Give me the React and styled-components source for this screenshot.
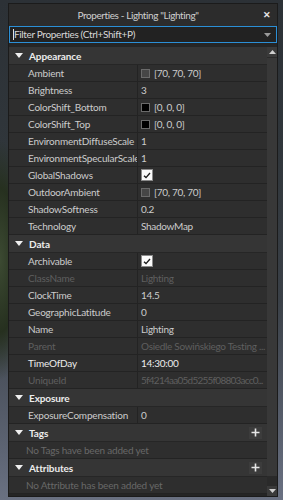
import React from "react";
import styled, { createGlobalStyle } from "styled-components";

const GlobalStyle = createGlobalStyle`
  html, body {
    margin: 0;
    padding: 0;
  }
  body {
    font-family: Lato, "Noto Sans", sans-serif;
    background: #2a2f33;
  }
`;

const sections = [
  {
    title: "Appearance",
    rows: [
      { name: "Ambient", value: "[70, 70, 70]", swatch: "#464646" },
      { name: "Brightness", value: "3" },
      { name: "ColorShift_Bottom", value: "[0, 0, 0]", swatch: "#000" },
      { name: "ColorShift_Top", value: "[0, 0, 0]", swatch: "#000" },
      { name: "EnvironmentDiffuseScale", value: "1" },
      { name: "EnvironmentSpecularScale", value: "1" },
      { name: "GlobalShadows", check: true },
      { name: "OutdoorAmbient", value: "[70, 70, 70]", swatch: "#464646" },
      { name: "ShadowSoftness", value: "0.2" },
      { name: "Technology", value: "ShadowMap" },
    ],
  },
  {
    title: "Data",
    rows: [
      { name: "Archivable", check: true },
      { name: "ClassName", value: "Lighting", disabled: true },
      { name: "ClockTime", value: "14.5" },
      { name: "GeographicLatitude", value: "0" },
      { name: "Name", value: "Lighting" },
      { name: "Parent", value: "Osiedle Sowińskiego Testing ...", disabled: true },
      { name: "TimeOfDay", value: "14:30:00", bright: true },
      { name: "UniqueId", value: "5f4214aa05d5255f08803acc0...", disabled: true, tight: true },
    ],
  },
  {
    title: "Exposure",
    rows: [{ name: "ExposureCompensation", value: "0" }],
  },
];

const Caret = () => (
  <svg width="8" height="5" viewBox="0 0 8 5">
    <path d="M0 0 H8 L4 5 Z" fill="#f0f0f0" />
  </svg>
);

const Plus = () => (
  <svg width="9" height="9" viewBox="0 0 9 9">
    <path d="M4.5 0.5 V8.5 M0.5 4.5 H8.5" stroke="#e6e6e6" strokeWidth="1.6" />
  </svg>
);

const Check = () => (
  <svg width="8" height="7" viewBox="0 0 8 7">
    <path d="M1 3.8 L3 5.6 L7 1" stroke="#1a1a1a" strokeWidth="1.4" fill="none" />
  </svg>
);

const App = () => {
  return (
    <>
      <GlobalStyle />
      <Scene>
        <Window>
          <TitleBar>
            <Title>Properties - Lighting "Lighting"</Title>
            <Close>✕</Close>
          </TitleBar>
          <Filter>
            <FilterText>Filter Properties (Ctrl+Shift+P)</FilterText>
            <DropArrow>
              <svg width="7" height="4" viewBox="0 0 7 4">
                <path d="M0 0 H7 L3.5 4 Z" fill="#9a9a9a" />
              </svg>
            </DropArrow>
          </Filter>
          <Body>
            <List>
              {sections.map((s) => (
                <React.Fragment key={s.title}>
                  <Header>
                    <Caret />
                    <HeaderText>{s.title}</HeaderText>
                  </Header>
                  {s.rows.map((r) => (
                    <Row key={r.name}>
                      <NameCell $disabled={r.disabled} $bright={r.bright}>
                        {r.name}
                      </NameCell>
                      <ValueCell $disabled={r.disabled} $bright={r.bright}>
                        {r.swatch && <Swatch $color={r.swatch} />}
                        {r.check ? (
                          <CheckBox>
                            <Check />
                          </CheckBox>
                        ) : (
                          <ValueText $tight={r.tight}>{r.value}</ValueText>
                        )}
                      </ValueCell>
                    </Row>
                  ))}
                </React.Fragment>
              ))}
              <Header>
                <Caret />
                <HeaderText>Tags</HeaderText>
                <AddButton>
                  <Plus />
                </AddButton>
              </Header>
              <EmptyRow>No Tags have been added yet</EmptyRow>
              <Header>
                <Caret />
                <HeaderText>Attributes</HeaderText>
                <AddButton>
                  <Plus />
                </AddButton>
              </Header>
              <EmptyRow>No Attribute has been added yet</EmptyRow>
            </List>
            <ScrollBar>
              <ScrollArrow>
                <svg width="7" height="4" viewBox="0 0 7 4">
                  <path d="M0 4 H7 L3.5 0 Z" fill="#cfcfcf" />
                </svg>
              </ScrollArrow>
              <Thumb />
              <ScrollArrow>
                <svg width="7" height="4" viewBox="0 0 7 4">
                  <path d="M0 0 H7 L3.5 4 Z" fill="#cfcfcf" />
                </svg>
              </ScrollArrow>
            </ScrollBar>
          </Body>
        </Window>
      </Scene>
    </>
  );
};

export default App;

const Scene = styled.div`
  width: 283px;
  height: 500px;
  box-sizing: border-box;
  padding: 3px 5px 3px 8px;
  background:
    radial-gradient(ellipse 30px 120px at 0 260px, #3c4a32 0%, #26301f 60%, transparent 100%),
    linear-gradient(180deg, #2c3136 0%, #30363b 30%, #3a4047 60%, #5d6473 90%, #6a7182 100%);
`;

const Window = styled.div`
  width: 270px;
  height: 494px;
  background: #252525;
  border: 1px solid #1b1b1b;
  box-sizing: border-box;
  display: flex;
  flex-direction: column;
  overflow: hidden;
`;

const TitleBar = styled.div`
  height: 22px;
  flex-shrink: 0;
  background: #2c2c2c;
  display: flex;
  align-items: center;
  justify-content: center;
  position: relative;
`;

const Title = styled.div`
  color: #cfcfcf;
  font-size: 10px;
  letter-spacing: -0.4px;
  margin-left: -10px;
`;

const Close = styled.div`
  position: absolute;
  right: 6px;
  top: 5px;
  color: #e6e6e6;
  font-size: 9px;
  font-weight: bold;
`;

const Filter = styled.div`
  height: 17px;
  flex-shrink: 0;
  border: 1px solid #2b8fd6;
  background: #222;
  box-sizing: border-box;
  display: flex;
  align-items: center;
  padding: 0 4px 0 3px;
`;

const FilterText = styled.div`
  flex: 1;
  color: #d8d8d8;
  font-size: 10px;
  letter-spacing: -0.35px;
  border-left: 1px solid #e0e0e0;
  line-height: 11px;
`;

const DropArrow = styled.div`
  display: flex;
  align-items: center;
  padding-right: 1px;
`;

const Body = styled.div`
  flex: 1;
  display: flex;
  margin-top: 4px;
  overflow: hidden;
`;

const List = styled.div`
  flex: 1;
  overflow: hidden;
  display: flex;
  flex-direction: column;
`;

const Header = styled.div`
  height: 18px;
  flex-shrink: 0;
  box-sizing: border-box;
  background: #353535;
  border-bottom: 1px solid #262626;
  display: flex;
  align-items: center;
  padding-left: 6px;
  gap: 6px;
`;

const HeaderText = styled.div`
  flex: 1;
  color: #ececec;
  font-size: 10px;
  letter-spacing: -0.1px;
  font-weight: bold;
`;

const AddButton = styled.div`
  width: 13px;
  height: 12px;
  margin-right: 5px;
  background: #3c3c3c;
  display: flex;
  align-items: center;
  justify-content: center;
`;

const Row = styled.div`
  height: 17px;
  flex-shrink: 0;
  box-sizing: border-box;
  background: #2e2e2e;
  border-bottom: 1px solid #232323;
  display: flex;
  font-size: 10px;
  letter-spacing: -0.2px;
`;

const NameCell = styled.div`
  width: 129px;
  box-sizing: border-box;
  padding-left: 19px;
  border-right: 1px solid #232323;
  display: flex;
  align-items: center;
  white-space: nowrap;
  overflow: hidden;
  color: ${(p) => (p.$disabled ? "#5f5f5f" : p.$bright ? "#ececec" : "#cccccc")};
`;

const ValueCell = styled.div`
  flex: 1;
  min-width: 0;
  padding-left: 3px;
  display: flex;
  align-items: center;
  gap: 4px;
  white-space: nowrap;
  overflow: hidden;
  color: ${(p) => (p.$disabled ? "#5f5f5f" : p.$bright ? "#ececec" : "#cccccc")};
`;

const ValueText = styled.span`
  letter-spacing: ${(p) => (p.$tight ? "-0.75px" : "-0.3px")};
`;

const Swatch = styled.div`
  width: 9px;
  height: 9px;
  box-sizing: border-box;
  border: 1px solid #6a6a6a;
  background: ${(p) => p.$color};
  flex-shrink: 0;
`;

const CheckBox = styled.div`
  width: 12px;
  height: 12px;
  box-sizing: border-box;
  border: 1px solid #8a8a8a;
  background: #fafafa;
  display: flex;
  align-items: center;
  justify-content: center;
`;

const EmptyRow = styled.div`
  height: 17px;
  flex-shrink: 0;
  box-sizing: border-box;
  background: #2e2e2e;
  border-bottom: 1px solid #232323;
  display: flex;
  align-items: center;
  padding-left: 17px;
  color: #686868;
  font-size: 10px;
  letter-spacing: -0.2px;
`;

const ScrollBar = styled.div`
  width: 10px;
  flex-shrink: 0;
  background: #2a2a2a;
  display: flex;
  flex-direction: column;
`;

const ScrollArrow = styled.div`
  height: 10px;
  flex-shrink: 0;
  background: #3a3a3a;
  display: flex;
  align-items: center;
  justify-content: center;
`;

const Thumb = styled.div`
  flex: 1;
  margin: 1px 0 10px;
  background: #383838;
`;
